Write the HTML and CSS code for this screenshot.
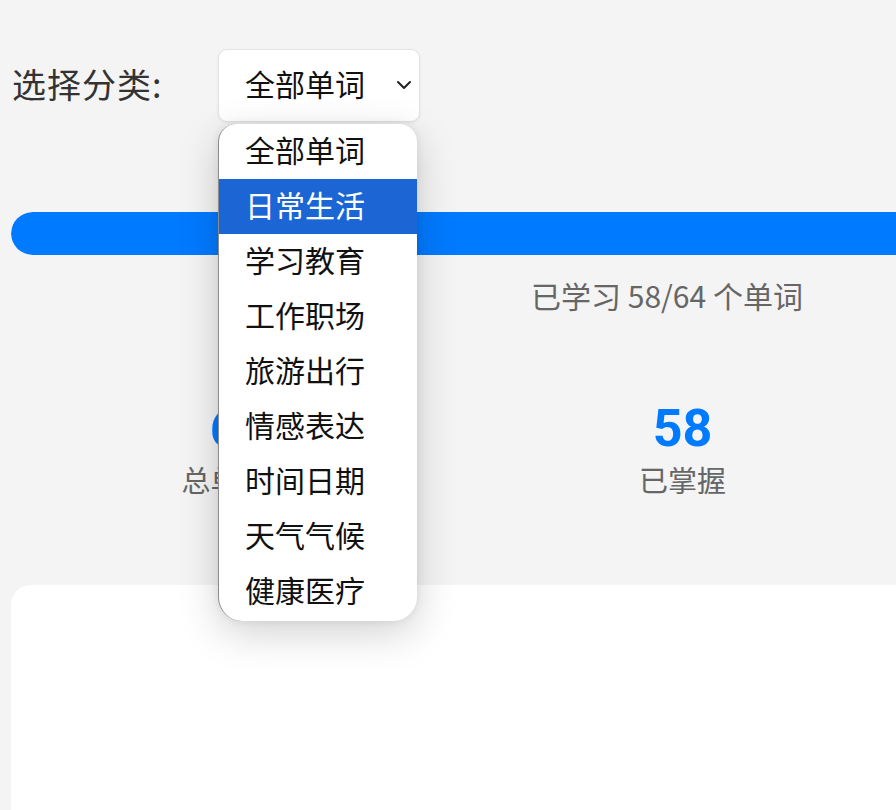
FILE: index.html
```html
<!DOCTYPE html>
<html lang="zh-CN">
<head>
<meta charset="utf-8">
<title>单词学习</title>
<link rel="stylesheet" href="styles.css">
</head>
<body>
<div class="page">
  <div class="filter-row">
    <label class="filter-label">选择分类:</label>
    <div class="select-wrap">
      <div class="select">
        <span class="select-value">全部单词</span>
        <svg class="chevron" width="16" height="10" viewBox="0 0 16 10"><path d="M2 2 L8 8 L14 2" fill="none" stroke="#222" stroke-width="2" stroke-linecap="round" stroke-linejoin="round"/></svg>
      </div>
      <ul class="dropdown">
        <li class="option">全部单词</li>
        <li class="option is-active">日常生活</li>
        <li class="option">学习教育</li>
        <li class="option">工作职场</li>
        <li class="option">旅游出行</li>
        <li class="option">情感表达</li>
        <li class="option">时间日期</li>
        <li class="option">天气气候</li>
        <li class="option">健康医疗</li>
      </ul>
    </div>
  </div>

  <div class="progress">
    <div class="progress-track"><div class="progress-fill" style="width:90.6%"></div></div>
    <p class="progress-text">已学习 58/64 个单词</p>
  </div>

  <div class="stats">
    <div class="stat"><div class="stat-num">64</div><div class="stat-label">总单词数</div></div>
    <div class="stat"><div class="stat-num">58</div><div class="stat-label">已掌握</div></div>
    <div class="stat"><div class="stat-num">6</div><div class="stat-label">待学习</div></div>
  </div>

  <div class="card"></div>
</div>
</body>
</html>
```

FILE: styles.css
```css
html, body {
  margin: 0;
  padding: 0;
}
body {
  background: #f4f4f4;
  overflow: hidden;
  width: 896px;
  height: 810px;
  font-family: Roboto, "Noto Sans CJK SC", sans-serif;
}
.page {
  width: 1312px;
  padding: 49px 0 0 11px;
}
.filter-row {
  display: flex;
  align-items: center;
}
.filter-label {
  width: 207px;
  padding: 0 0 5px 1px;
  box-sizing: border-box;
  font-family: "Noto Sans CJK SC", sans-serif;
  font-size: 34px;
  letter-spacing: 1px;
  color: #333;
}
.select-wrap {
  position: relative;
}
.select {
  width: 202px;
  height: 73px;
  box-sizing: border-box;
  background: #fff;
  border: 1px solid #e2e2e2;
  border-radius: 9px;
  display: flex;
  align-items: center;
  justify-content: space-between;
  padding: 0 7px 5px 26px;
  box-shadow: 0 1px 3px rgba(0,0,0,0.06);
}
.select-value {
  font-size: 30px;
  color: #111;
}
.chevron {
  display: block;
  margin-top: 4px;
}
.dropdown {
  position: absolute;
  top: 75px;
  left: 0;
  width: 199px;
  margin: 0;
  padding: 0 0 2px;
  list-style: none;
  background: #fff;
  border-radius: 18px 18px 24px 24px;
  border-left: 1px solid rgba(0,0,0,0.45);
  box-sizing: border-box;
  box-shadow: 0 12px 40px rgba(0,0,0,0.18), 0 0 8px rgba(0,0,0,0.08);
  overflow: hidden;
  z-index: 10;
}
.option {
  height: 55px;
  box-sizing: border-box;
  display: flex;
  align-items: center;
  padding: 0 0 5px 26px;
  font-size: 30px;
  color: #111;
}
.option.is-active {
  background: #1b66d4;
  color: #fff;
}
.progress {
  margin-top: 90px;
}
.progress-track {
  height: 43px;
  border-radius: 22px;
  background: #e3e3e3;
  overflow: hidden;
}
.progress-fill {
  height: 100%;
  background: #007aff;
  border-radius: 22px;
}
.progress-text {
  margin: 20px 0 0;
  text-align: center;
  font-family: "Noto Sans CJK SC", sans-serif;
  font-size: 30px;
  line-height: 40px;
  color: #666;
}
.stats {
  margin-top: 84px;
  margin-left: 7px;
  display: grid;
  grid-template-columns: repeat(3, 443px);
}
.stat {
  text-align: center;
}
.stat-num {
  font-size: 52px;
  line-height: 60px;
  font-weight: 700;
  color: #007aff;
}
.stat-label {
  font-family: "Noto Sans CJK SC", sans-serif;
  font-size: 29px;
  line-height: 40px;
  color: #666;
}
.card {
  margin-top: 86px;
  height: 400px;
  background: #fff;
  border-radius: 20px;
}
```
